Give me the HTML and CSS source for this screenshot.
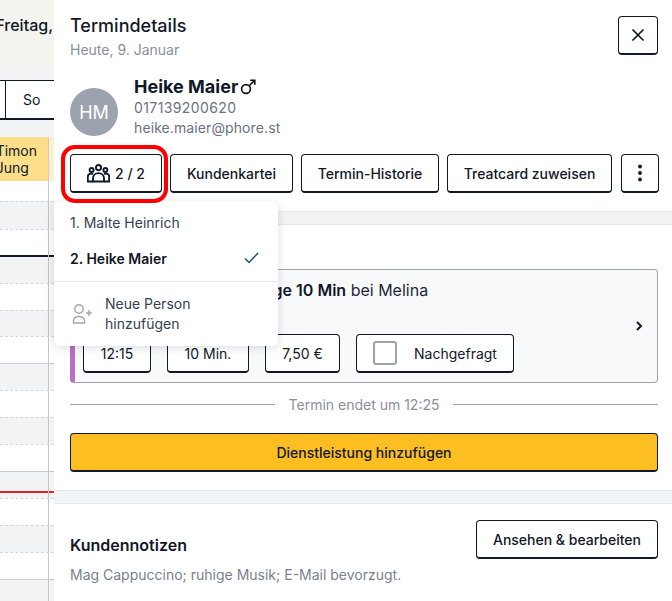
FILE: index.html
```html
<!DOCTYPE html>
<html lang="de">
<head>
  <meta charset="UTF-8">
  <title>Termindetails</title>
  <link rel="stylesheet" href="styles.css">
</head>
<body>

<div class="page">

  <!-- Kalender im Hintergrund -->
  <div class="calendar">
    <div class="cal-head"><span>Freitag,</span></div>
    <div class="cal-gap"></div>
    <div class="cal-tabs"><div class="cal-tab">So</div></div>
    <div class="cal-gap small"></div>
    <div class="cal-staff">
      <div class="staff-cell"><span>Timon<br>Jung</span></div>
      <div class="staff-next"></div>
    </div>
    <div class="cal-grid">
      <div class="slot h20"></div>
      <div class="slot grey dashed h28"></div>
      <div class="slot dashed h26"></div>
      <div class="slot grey strong h28"></div>
      <div class="slot dashed h27"></div>
      <div class="slot grey dashed h26"></div>
      <div class="slot dashed h27"></div>
      <div class="slot grey solid h27"></div>
      <div class="slot dashed h27"></div>
      <div class="slot grey dashed h27"></div>
      <div class="slot dashed h27"></div>
      <div class="slot grey solid h27"></div>
      <div class="slot dashed h27"></div>
      <div class="slot grey dashed h27"></div>
      <div class="slot dashed h27"></div>
      <div class="slot grey solid h27"></div>
      <div class="now-line"></div>
    </div>
  </div>

  <!-- Seitenpanel -->
  <div class="panel">
    <div class="panel-top">
      <div class="title-row">
        <div>
          <div class="title">Termindetails</div>
          <div class="subtitle">Heute, 9. Januar</div>
        </div>
        <button class="btn btn-icon">
          <svg width="14" height="14" viewBox="0 0 14 14" fill="none" stroke="#111827" stroke-width="1.7"><path d="M1.5 1.5l11 11M12.5 1.5l-11 11"/></svg>
        </button>
      </div>

      <div class="customer">
        <div class="avatar">HM</div>
        <div class="customer-info">
          <div class="customer-name">Heike Maier
            <svg width="16" height="16" viewBox="0 0 16 16" fill="none" stroke="#111" stroke-width="1.6"><circle cx="6" cy="10" r="4.4"/><path d="M9.2 6.8L14.6 1.4M10.2 1.2h4.6v4.6"/></svg>
          </div>
          <div class="customer-line phone">017139200620</div>
          <div class="customer-line">heike.maier@phore.st</div>
        </div>
      </div>

      <div class="actions">
        <button class="btn btn-persons">
          <svg width="23" height="19" viewBox="0 0 23 19" fill="none" stroke="#111827" stroke-width="1.9"><circle cx="11.5" cy="3.6" r="2.6"/><circle cx="4.6" cy="6" r="2"/><circle cx="18.4" cy="6" r="2"/><path d="M6 17.5v-3.2c0-3 2.4-5.2 5.5-5.2s5.500 2.200 5.500 5.200v3.200z"/><path d="M6 10.200c-.6-.4-1.300-.6-2-.6-1.700 0-3.200 1.400-3.200 3.200v4.700h5.200M17 10.200c.6-.4 1.300-.6 2-.6 1.700 0 3.200 1.400 3.200 3.200v4.700H17"/></svg>
          2 / 2
        </button>
        <button class="btn btn-card">Kundenkartei</button>
        <button class="btn btn-history">Termin-Historie</button>
        <button class="btn btn-treat">Treatcard zuweisen</button>
        <button class="btn btn-more">
          <svg width="4" height="18" viewBox="0 0 4 18" fill="#111827"><circle cx="2" cy="2.500" r="1.900"/><circle cx="2" cy="9" r="1.900"/><circle cx="2" cy="15.500" r="1.900"/></svg>
        </button>
      </div>
    </div>

    <div class="band"></div>

    <div class="section">
      <div class="service-card">
        <div class="service-body">
          <div class="service-name"><b>Rücken- und Kopfmassage 10 Min</b> bei Melina</div>
          <div class="chips">
            <button class="btn chip chip-time">12:15</button>
            <button class="btn chip chip-dur">10 Min.</button>
            <button class="btn chip chip-price">7,50 €</button>
            <button class="btn chip chip-asked"><span class="checkbox"></span>Nachgefragt</button>
          </div>
        </div>
        <svg class="chevron" width="8" height="12" viewBox="0 0 8 12" fill="none" stroke="#111827" stroke-width="2"><path d="M2 2l4 4-4 4"/></svg>
      </div>

      <div class="ends"><span>Termin endet um 12:25</span></div>

      <button class="btn btn-add">Dienstleistung hinzufügen</button>
    </div>

    <div class="band"></div>

    <div class="notes">
      <div class="notes-row">
        <div class="notes-title">Kundennotizen</div>
        <button class="btn btn-edit">Ansehen &amp; bearbeiten</button>
      </div>
      <div class="notes-text">Mag Cappuccino; ruhige Musik; E-Mail bevorzugt.</div>
    </div>
  </div>

  <!-- Dropdown und Markierung liegen über dem Panel -->
  <div class="dropdown">
    <div class="dd-item">1. Malte Heinrich</div>
    <div class="dd-item dd-active">2. Heike Maier
      <svg width="15" height="12" viewBox="0 0 15 12" fill="none" stroke="#1d4f73" stroke-width="1.500"><path d="M1 6.500l4 4L14 1"/></svg>
    </div>
    <div class="dd-add">
      <svg width="20" height="20" viewBox="0 0 20 20" fill="none" stroke="#a3a8b4" stroke-width="1.500"><circle cx="7" cy="5" r="4.200"/><path d="M1.500 19v-2c0-2.800 2.500-4.500 5.500-4.500s5.500 1.700 5.500 4.500v2z"/><path d="M14 9h6M17 6v6"/></svg>
      <span>Neue Person<br>hinzufügen</span>
    </div>
  </div>

  <div class="red-mark"></div>

</div>

</body>
</html>
```

FILE: styles.css
```css
* { box-sizing: border-box; }
html, body { margin: 0; padding: 0; }
body {
  font-family: Inter, "Liberation Sans", sans-serif;
  color: #111827;
  background-color: #fff;
  overflow: hidden;
}

.page {
  position: relative;
  display: flex;
  width: 672px;
  height: 601px;
  overflow: hidden;
}

/* Kalender */
.calendar {
  width: 54px;
  flex: none;
  display: flex;
  flex-direction: column;
  background-color: #f2f3f5;
  font-size: 14px;
}
.cal-head {
  flex: none;
  height: 63px;
  background-color: #f4f4ef;
  display: flex;
  justify-content: flex-end;
  padding-top: 15px;
  padding-right: 1px;
  font-size: 16px;
  font-weight: 500;
  white-space: nowrap;
}
.cal-gap { flex: none; height: 17px; }
.cal-gap.small { height: 17px; }
.cal-tabs {
  flex: none;
  height: 40px;
  background-color: #fff;
  border-top: 1px solid #111827;
  border-bottom: 2px solid #111827;
  padding-left: 5px;
}
.cal-tab {
  height: 100%;
  border-left: 1px solid #111827;
  display: flex;
  align-items: center;
  padding-left: 17px;
}
.cal-staff {
  flex: none;
  height: 44px;
  display: flex;
  background-color: #fdf0cd;
}
.staff-cell {
  width: 49px;
  background-color: #fddf8b;
  border-right: 1px solid #c9cbd0;
  display: flex;
  justify-content: flex-end;
  align-items: center;
  line-height: 17px;
  white-space: nowrap;
}
.staff-cell span { margin-right: 11px; }
.staff-next { flex: 1; }

.cal-grid {
  position: relative;
  flex: 1;
  min-height: 0;
  overflow: hidden;
  background-color: #fff;
}
.cal-grid::after {
  content: "";
  position: absolute;
  left: 48px;
  top: 0;
  bottom: 0;
  width: 1px;
  background-color: #c4c6ca;
}
.slot { background-color: #fff; }
.slot.grey { background-color: #f2f3f5; }
.slot.dashed { border-top: 1px dashed #d4d6da; }
.slot.solid { border-top: 1px solid #c9cbd0; }
.slot.strong { border-top: 2px solid #111827; }
.h20 { height: 20px; }
.h26 { height: 26px; }
.h27 { height: 27px; }
.h28 { height: 28px; }
.now-line {
  position: absolute;
  left: 0;
  right: 0;
  top: 310px;
  height: 2px;
  background-color: #dc2626;
}

/* Panel */
.panel {
  flex: 1;
  min-width: 0;
  background-color: #fff;
  display: flex;
  flex-direction: column;
}
.panel-top { padding: 16px 14px 18px 16px; }
.title-row {
  display: flex;
  justify-content: space-between;
}
.title {
  font-size: 18px;
  font-weight: 500;
  line-height: 20px;
}
.subtitle {
  margin-top: 5px;
  font-size: 14px;
  line-height: 18px;
  color: #8b909b;
}
.btn {
  font-family: inherit;
  font-size: 14px;
  font-weight: 500;
  color: #111827;
  background-color: #fff;
  border: 1px solid #111827;
  border-bottom-width: 2px;
  border-radius: 4px;
  height: 39px;
  padding: 0;
  display: inline-flex;
  align-items: center;
  justify-content: center;
  cursor: pointer;
}
.btn-icon { width: 40px; }
.customer {
  display: flex;
  gap: 16px;
  margin-top: 17px;
}
.avatar {
  width: 48px;
  height: 48px;
  margin-top: 12px;
  border-radius: 50%;
  background-color: #9ca3af;
  color: #fff;
  font-size: 18px;
  display: flex;
  align-items: center;
  justify-content: center;
}
.customer-name {
  font-size: 18px;
  font-weight: 700;
  line-height: 22px;
  display: flex;
  align-items: center;
  gap: 2px;
}
.customer-line {
  font-size: 14px;
  line-height: 20px;
  letter-spacing: 0.1px;
  color: #6b7280;
}
.phone { letter-spacing: 0.4px; }
.actions {
  display: flex;
  gap: 8px;
  margin-top: 16px;
}
.actions .btn { flex: none; }
.btn-persons { width: 92px; gap: 5px; }
.btn-card { width: 123px; }
.btn-history { width: 138px; }
.btn-treat { width: 165px; }
.btn-more { width: 38px; margin-left: 1px; }

.band {
  height: 14px;
  background-color: #f2f3f5;
  border-top: 1px solid #e5e7eb;
  border-bottom: 1px solid #e5e7eb;
  flex: none;
}

.section { padding: 44px 14px 18px 16px; }
.service-card {
  display: flex;
  align-items: center;
  height: 114px;
  background-color: #f8f9fb;
  border: 1px solid #9ca3af;
  border-left: 5px solid #b86fc5;
  border-radius: 4px;
  padding: 0 14px 0 8px;
}
.service-body {
  flex: 1;
  min-width: 0;
  align-self: flex-start;
  padding-top: 10px;
}
.service-name {
  font-size: 16px;
  line-height: 20px;
  white-space: nowrap;
  color: #1f2937;
}
.service-name b { font-weight: 600; color: #111827; }
.chips {
  display: flex;
  gap: 16px;
  margin-top: 34px;
}
.chip { font-weight: 400; font-size: 14px; }
.chip-time { width: 68px; }
.chip-dur { width: 82px; }
.chip-price { width: 75px; }
.chip-asked { width: 158px; gap: 17px; }
.checkbox {
  width: 24px;
  height: 24px;
  border: 2px solid #9ca3af;
  border-radius: 3px;
}
.chevron { flex: none; }

.ends {
  display: flex;
  align-items: center;
  gap: 14px;
  margin-top: 12px;
  height: 18px;
  font-size: 14px;
  color: #8b909b;
}
.ends::before, .ends::after {
  content: "";
  flex: 1;
  height: 1px;
  background-color: #9ca3af;
}
.btn-add {
  width: 100%;
  margin-top: 20px;
  background-color: #fdbe22;
}

.notes { padding: 16px 14px 0 16px; }
.notes-row {
  display: flex;
  justify-content: space-between;
  align-items: flex-end;
}
.notes-title {
  font-size: 16px;
  font-weight: 600;
  line-height: 20px;
  margin-bottom: 4px;
}
.btn-edit { width: 182px; }
.notes-text {
  margin-top: 7px;
  font-size: 14px;
  line-height: 18px;
  color: #7b818c;
}

/* Overlays */
.red-mark {
  position: absolute;
  left: 61px;
  top: 145px;
  width: 107px;
  height: 58px;
  border: 4px solid #f00;
  border-radius: 14px;
}
.dropdown {
  position: absolute;
  left: 54px;
  top: 201px;
  width: 224px;
  height: 145px;
  padding-top: 3px;
  background-color: #fff;
  border-radius: 6px;
  box-shadow: 0 2px 10px rgba(17, 24, 39, 0.14);
  font-size: 14px;
}
.dd-item {
  height: 36px;
  display: flex;
  align-items: center;
  justify-content: space-between;
  padding: 0 19px 0 16px;
  color: #374151;
}
.dd-active {
  font-weight: 600;
  color: #111827;
}
.dd-add {
  margin-top: 5px;
  border-top: 1px solid #e5e7eb;
  padding: 12px 16px 0 18px;
  display: flex;
  align-items: center;
  gap: 13px;
  line-height: 20px;
  color: #374151;
}
```
